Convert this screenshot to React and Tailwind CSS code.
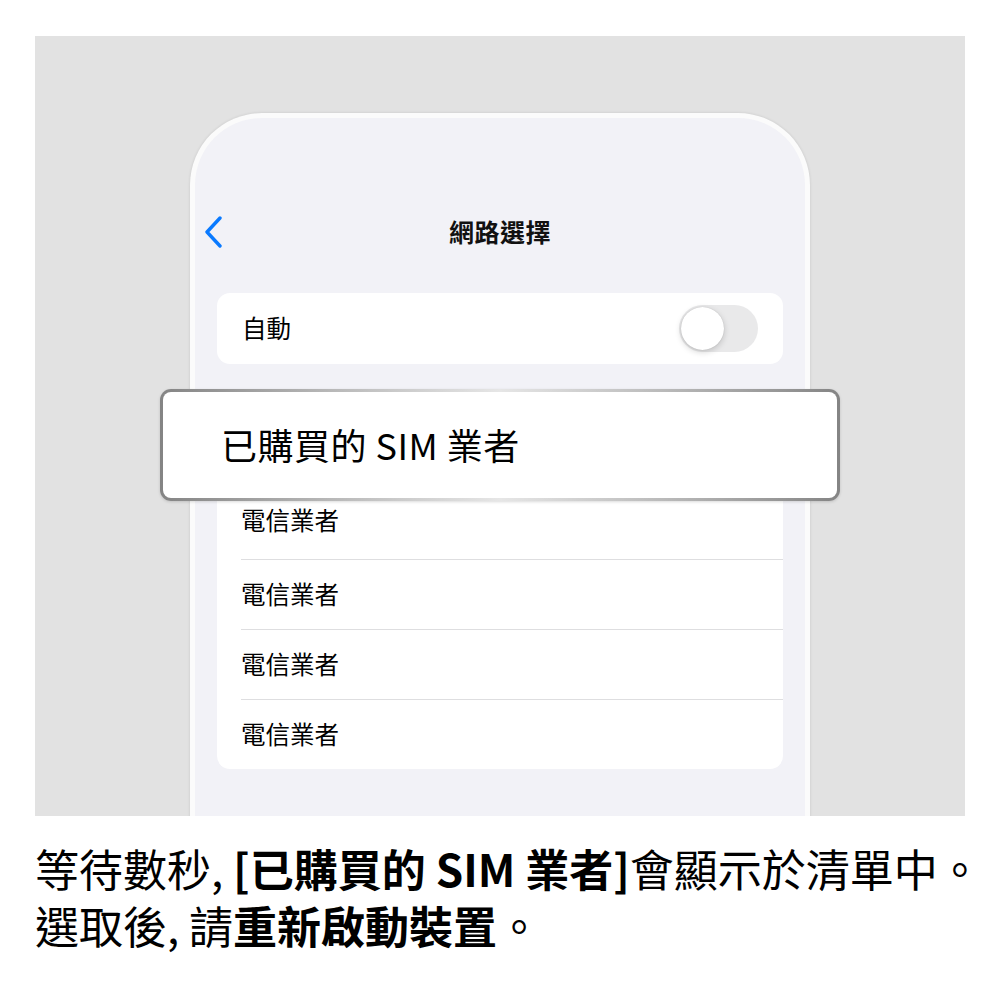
import React from "react";

const CJK = { fontFamily: '"Noto Sans CJK TC", "Noto Sans", sans-serif' };

function Toggle() {
  return (
    <div className="w-[79px] h-[47px] rounded-full bg-[#e9e9ea] p-[2px] flex items-center">
      <div className="w-[43px] h-[43px] rounded-full bg-white shadow-[0_2px_6px_rgba(0,0,0,0.18),0_0_1px_rgba(0,0,0,0.2)]" />
    </div>
  );
}

function CarrierRow({ first }) {
  return (
    <div
      className={
        "ml-[24px] h-[70px] flex items-center text-[24.5px] text-black " +
        (first ? "pb-[8px]" : "border-t border-[#dedee0]")
      }
    >
      電信業者
    </div>
  );
}

export default function App() {
  return (
    <div className="w-[1000px] h-[987px] bg-white pt-[36px]" style={CJK}>
      {/* device illustration */}
      <div className="relative ml-[35px] w-[930px] h-[780px] bg-[#e2e2e2] overflow-hidden">
        <div className="mx-auto mt-[77px] w-[620px] h-[720px] rounded-t-[72px] bg-[#fbfbfb] p-[5px] pb-0 shadow-[0_0_3px_rgba(0,0,0,0.12)]">
          <div className="h-full rounded-t-[67px] bg-[#f2f2f7] px-[22px] pt-[92px]">
            {/* navigation bar */}
            <div className="relative h-[44px] flex items-center justify-center">
              <svg
                className="absolute left-[-14px] top-[6px]"
                width="22"
                height="32"
                viewBox="0 0 22 32"
                fill="none"
              >
                <path
                  d="M17 2 L4 16 L17 30"
                  stroke="#0a7aff"
                  strokeWidth="3.4"
                  strokeLinecap="round"
                  strokeLinejoin="round"
                />
              </svg>
              <span className="text-[25px] font-semibold text-[#111] tracking-[0.5px]">
                網路選擇
              </span>
            </div>

            {/* automatic selection */}
            <div className="mt-[39px] h-[71px] rounded-[13px] bg-white flex items-center justify-between pl-[25px] pr-[25px]">
              <span className="text-[24.5px] text-black">自動</span>
              <Toggle />
            </div>

            {/* carrier list */}
            <div className="mt-[36px] rounded-[13px] bg-white pt-[89px]">
              <CarrierRow first />
              <CarrierRow />
              <CarrierRow />
              <CarrierRow />
            </div>
          </div>
        </div>

        {/* highlighted entry */}
        <div className="absolute left-[125px] top-[353px] w-[680px] h-[112px] rounded-[11px] p-[3px] bg-[linear-gradient(90deg,#848484,#b8b8b8_25%,#e6e6e6_50%,#b8b8b8_75%,#848484)] shadow-[0_1px_3px_rgba(0,0,0,0.15)]">
          <div className="w-full h-full rounded-[8px] bg-white flex items-center pl-[58px] pb-[3px]">
            <span className="text-[36px] text-black tracking-[0.5px]">已購買的 SIM 業者</span>
          </div>
        </div>
      </div>

      {/* caption */}
      <div className="mt-[24px] pl-[35px] text-[44px] leading-[57px] text-black">
        <div className="whitespace-nowrap">
          等待數秒, <span className="font-bold">[已購買的 SIM 業者]</span>會顯示於清單中。
        </div>
        <div className="whitespace-nowrap">
          選取後, 請<span className="font-bold">重新啟動裝置</span>。
        </div>
      </div>
    </div>
  );
}
